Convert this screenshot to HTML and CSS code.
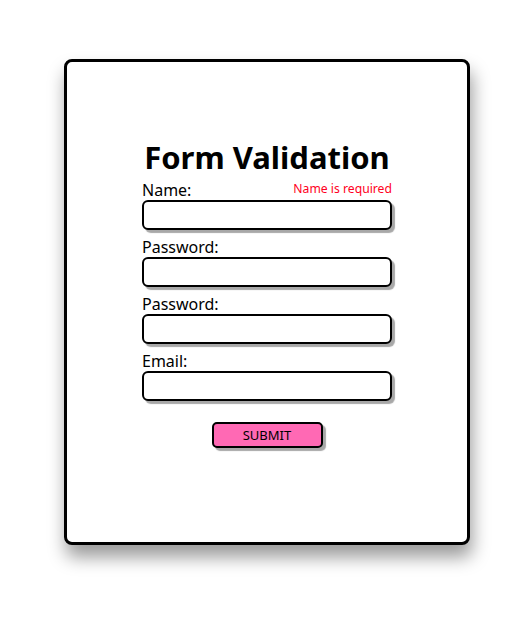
FILE: index.html
```html
<!DOCTYPE html>
<html lang="en">
<head>
<meta charset="utf-8">
<title>Form Validation</title>
<link rel="stylesheet" href="styles.css">
</head>
<body>
<div class="page">
  <div class="card">
    <h1 class="title">Form Validation</h1>
    <form class="form">
      <div class="field">
        <div class="label-row">
          <label class="label" for="name">Name:</label>
          <span class="error">Name is required</span>
        </div>
        <input class="input" id="name" type="text">
      </div>
      <div class="field">
        <div class="label-row">
          <label class="label" for="pw1">Password:</label>
        </div>
        <input class="input" id="pw1" type="password">
      </div>
      <div class="field">
        <div class="label-row">
          <label class="label" for="pw2">Password:</label>
        </div>
        <input class="input" id="pw2" type="password">
      </div>
      <div class="field">
        <div class="label-row">
          <label class="label" for="email">Email:</label>
        </div>
        <input class="input" id="email" type="email">
      </div>
      <div class="actions">
        <button class="submit" type="button">SUBMIT</button>
      </div>
    </form>
  </div>
</div>
</body>
</html>
```
FILE: styles.css
```css
html, body {
  margin: 0;
  padding: 0;
  background: #ffffff;
}
body {
  font-family: "Noto Sans", "Open Sans", sans-serif;
  color: #000;
}
.page {
  box-sizing: border-box;
  min-height: 627px;
  padding: 59px 0 0 64px;
}
.card {
  box-sizing: border-box;
  width: 406px;
  height: 486px;
  border: 3px solid #000;
  border-radius: 8px;
  background: #fff;
  box-shadow: 2px 12px 18px rgba(0, 0, 0, 0.4);
  display: flex;
  flex-direction: column;
  align-items: center;
  padding-top: 76px;
}
.title {
  margin: 0;
  font-size: 31px;
  line-height: 38px;
  font-weight: 700;
  letter-spacing: 0;
}
.form {
  width: 250px;
  margin: 5px 0 0;
}
.field {
  margin-bottom: 8px;
}
.label-row {
  display: flex;
  justify-content: space-between;
  align-items: flex-start;
  height: 19px;
  line-height: 19px;
}
.label {
  font-size: 16px;
}
.error {
  font-size: 12.2px;
  line-height: 15px;
  color: #ff0022;
}
.input {
  display: block;
  box-sizing: border-box;
  width: 250px;
  height: 30px;
  margin: 0;
  border: 2px solid #000;
  border-radius: 6px;
  box-shadow: 3px 3px 1px #a8a8a8;
  background: #fff;
  font: inherit;
  outline: none;
}
.actions {
  display: flex;
  justify-content: center;
  padding-top: 13px;
}
.submit {
  box-sizing: border-box;
  width: 111px;
  height: 26px;
  border: 2px solid #000;
  border-radius: 5px;
  background: #ff69b4;
  box-shadow: 3px 3px 1px #a8a8a8;
  font-family: inherit;
  font-size: 13px;
  color: #000;
  padding: 0;
}
```
